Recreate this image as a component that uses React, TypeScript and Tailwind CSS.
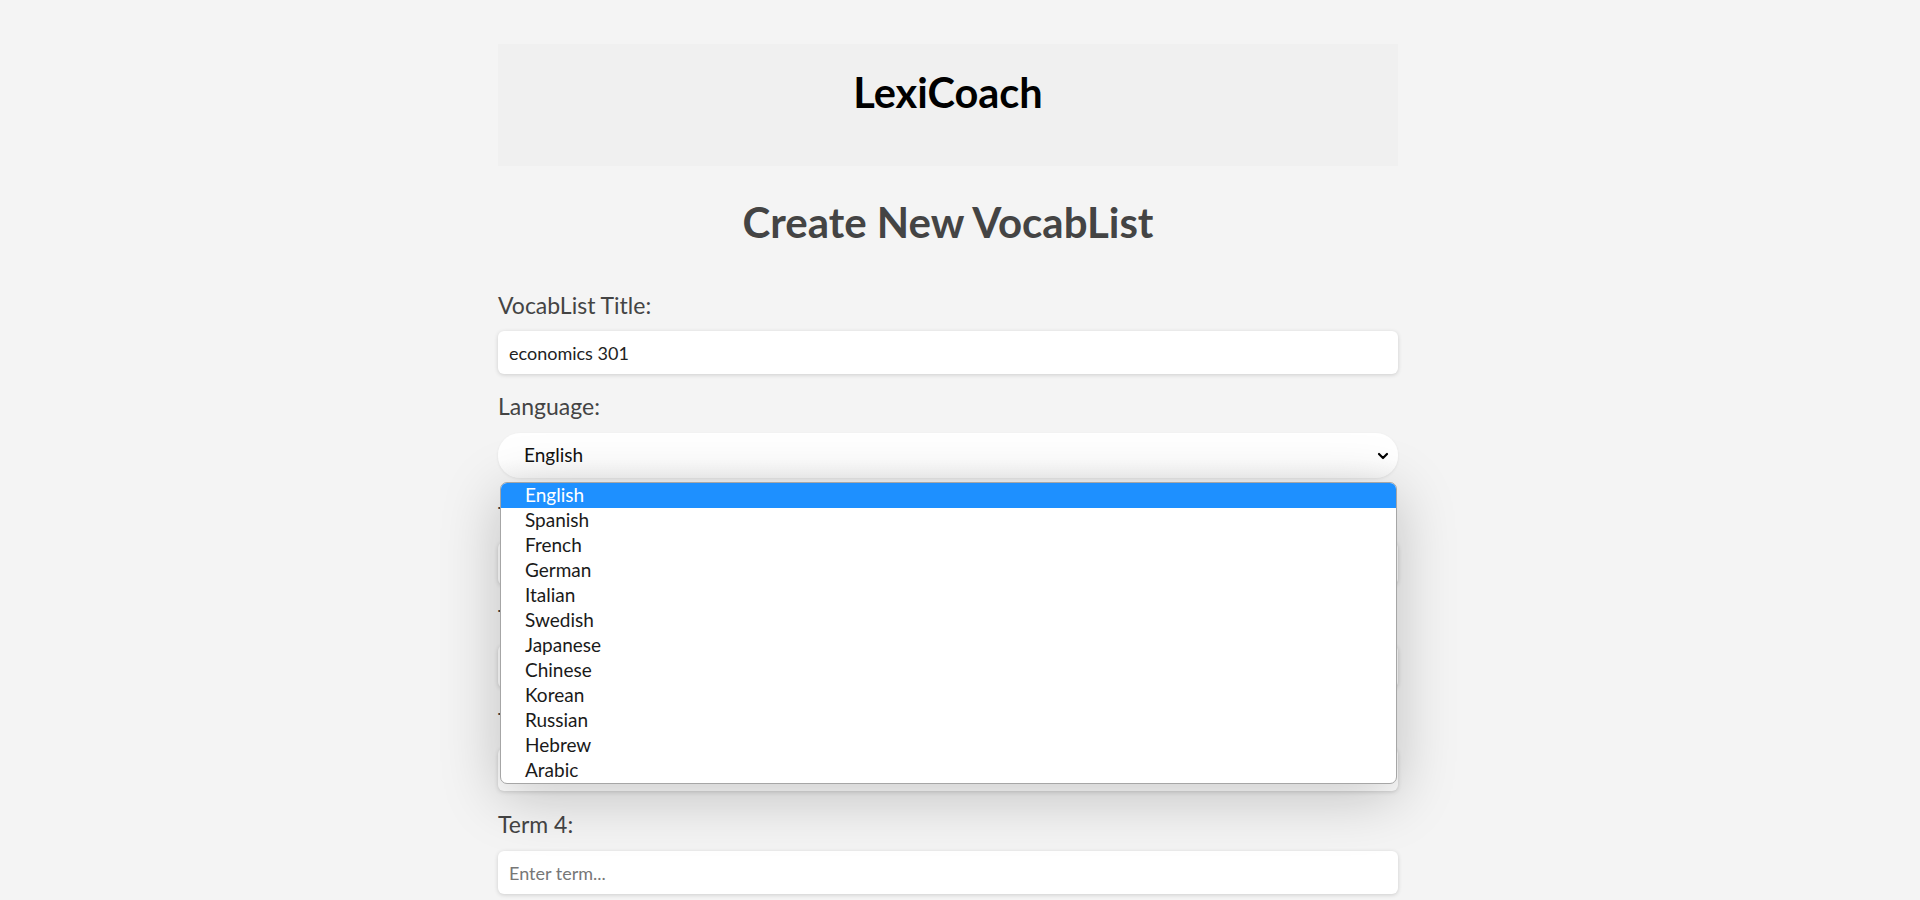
import { useState } from "react";

const LANGUAGES = [
  "English",
  "Spanish",
  "French",
  "German",
  "Italian",
  "Swedish",
  "Japanese",
  "Chinese",
  "Korean",
  "Russian",
  "Hebrew",
  "Arabic",
];

const TERMS = [1, 2, 3, 4, 5];

export default function App() {
  const [title, setTitle] = useState("economics 301");
  const [language, setLanguage] = useState("English");
  const [open, setOpen] = useState(true);

  return (
    <div
      className="min-h-screen bg-[#f4f4f4] pr-[24px] text-[#444]"
      style={{ fontFamily: "Lato, 'Noto Sans', sans-serif" }}
    >
      <div className="mx-auto w-[900px] pt-[44px] pb-[120px]">
        {/* Header */}
        <header className="bg-[#f0f0f0] pt-[24px] pb-[50px] text-center">
          <h1 className="text-[41.5px] font-bold leading-[48px] text-black">LexiCoach</h1>
        </header>

        <h2 className="mt-[32px] text-center text-[42px] font-bold leading-[48px] text-[#444]">
          Create New VocabList
        </h2>

        <form className="mt-[46px]" onSubmit={(e) => e.preventDefault()}>
          {/* Title */}
          <label className="mb-[13px] block text-[23px] leading-[26px]">VocabList Title:</label>
          <input
            type="text"
            value={title}
            onChange={(e) => setTitle(e.target.value)}
            className="mb-[19px] block h-[43px] w-full rounded-[6px] bg-white px-[11px] text-[18px] text-[#222] shadow-[0_1px_4px_rgba(0,0,0,0.16)] outline-none"
          />

          {/* Language */}
          <label className="mb-[14px] block text-[23px] leading-[26px]">Language:</label>
          <div className="relative z-10 mb-[24px]">
            <button
              type="button"
              onClick={() => setOpen(!open)}
              className="flex h-[45px] w-full items-center justify-between rounded-[22px] bg-gradient-to-b from-white from-60% to-[#f7f7f7] pl-[26px] pr-[8px] text-left text-[19px] text-[#111] shadow-[0_1px_3px_rgba(0,0,0,0.08)]"
            >
              <span>{language}</span>
              <svg width="14" height="14" viewBox="0 0 14 14" fill="none" stroke="#000" strokeWidth="2.2" strokeLinecap="round" strokeLinejoin="round">
                <path d="M3 5l4 4 4-4" />
              </svg>
            </button>

            {open && (
              <ul className="absolute top-[calc(100%+4px)] left-[2px] right-[1px] overflow-hidden rounded-[7px] border border-[#a6a6a6] bg-white shadow-[0_12px_60px_rgba(0,0,0,0.22)]">
                {LANGUAGES.map((lang) => (
                  <li
                    key={lang}
                    onClick={() => {
                      setLanguage(lang);
                      setOpen(false);
                    }}
                    className={`h-[25px] pl-[24px] text-[19px] leading-[24px] ${
                      lang === language ? "bg-[#1e90ff] text-white" : "text-[#1a1a1a]"
                    }`}
                  >
                    {lang}
                  </li>
                ))}
              </ul>
            )}
          </div>

          {/* Terms */}
          {TERMS.map((n) => (
            <div key={n}>
              <label className="mb-[14px] block text-[23px] leading-[26px]">Term {n}:</label>
              <input
                type="text"
                placeholder="Enter term..."
                className="mb-[20px] block h-[43px] w-full rounded-[6px] bg-white px-[11px] text-[18px] text-[#222] placeholder:text-[#777] shadow-[0_1px_4px_rgba(0,0,0,0.16)] outline-none"
              />
            </div>
          ))}

          <div className="mt-[10px] flex gap-3">
            <button type="button" className="rounded-[6px] bg-[#444] px-5 py-[10px] text-[18px] text-white">
              Add Term
            </button>
            <button type="submit" className="rounded-[6px] bg-[#1e90ff] px-5 py-[10px] text-[18px] text-white">
              Create VocabList
            </button>
          </div>
        </form>
      </div>
    </div>
  );
}
